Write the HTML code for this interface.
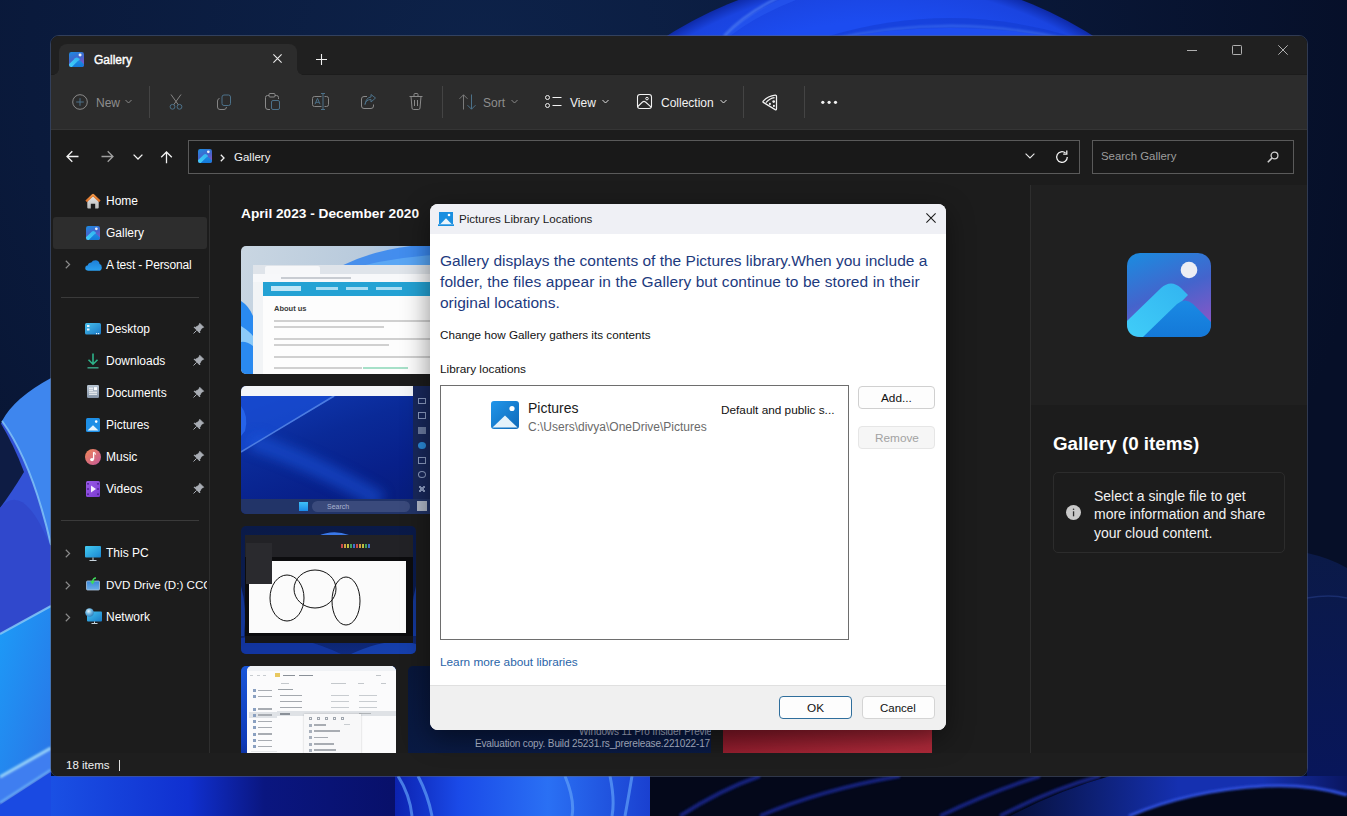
<!DOCTYPE html>
<html><head><meta charset="utf-8">
<style>
*{box-sizing:border-box;margin:0;padding:0}
html,body{width:1347px;height:816px;overflow:hidden;background:#0a1838;font-family:"Liberation Sans",sans-serif}
.a{position:absolute}
#wall{position:absolute;left:0;top:0;width:1347px;height:816px}
#win{position:absolute;left:51px;top:36px;width:1256px;height:740px;border-radius:8px;background:#1c1c1c;overflow:hidden}
#winb{position:absolute;left:50px;top:35px;width:1258px;height:742px;border-radius:9px;border:1px solid rgba(90,100,120,.5)}
.t{position:absolute;white-space:nowrap;color:#fff;line-height:1}
svg.i{position:absolute;overflow:visible}
</style></head><body>
<svg width="0" height="0" style="position:absolute">
  <defs>
    <linearGradient id="galBg" x1="0.2" y1="0" x2="0.6" y2="1">
      <stop offset="0" stop-color="#1f88de"/>
      <stop offset="0.5" stop-color="#4464cc"/>
      <stop offset="1" stop-color="#8a56c6"/>
    </linearGradient>
    <linearGradient id="galM1" x1="0" y1="1" x2="1" y2="0">
      <stop offset="0" stop-color="#40cdf8"/>
      <stop offset="1" stop-color="#32b4f0"/>
    </linearGradient>
    <linearGradient id="galM2" x1="0" y1="0" x2="0" y2="1">
      <stop offset="0" stop-color="#1a8ae4"/>
      <stop offset="1" stop-color="#1478d8"/>
    </linearGradient>
    <symbol id="gal" viewBox="0 0 84 84">
      <rect x="0" y="0" width="84" height="84" rx="13" fill="url(#galBg)"/>
      <circle cx="62" cy="17" r="8.3" fill="#eceef4"/>
      <path d="M0 68 L34 35 Q44 26 54 35 L61 42 L20 84 H14 Q0 84 0 71Z" fill="url(#galM1)"/>
      <path d="M16 84 L50 51 Q58 44 66 51 L84 69 V71 Q84 84 71 84Z" fill="url(#galM2)"/>
    </symbol>
    <linearGradient id="picG" x1="0" y1="0" x2="1" y2="1">
      <stop offset="0" stop-color="#2196ea"/>
      <stop offset="1" stop-color="#0e68b8"/>
    </linearGradient>
    <symbol id="pic" viewBox="0 0 28 28">
      <rect x="0" y="0" width="28" height="28" rx="3" fill="url(#picG)"/>
      <circle cx="21" cy="7.5" r="2.6" fill="#fff"/>
      <path d="M1.5 26.5 L14 14.5 L26.5 26.5Z" fill="#e4f2fb"/>
    </symbol>
  </defs>
</svg>
<svg id="wall" width="1347" height="816" viewBox="0 0 1347 816">
  <defs>
    <radialGradient id="bgG" cx="480" cy="60" r="900" gradientUnits="userSpaceOnUse">
      <stop offset="0" stop-color="#0d2249"/>
      <stop offset="0.5" stop-color="#0a1a3c"/>
      <stop offset="1" stop-color="#060f28"/>
    </radialGradient>
    <radialGradient id="topB" cx="880" cy="372" r="398" gradientUnits="userSpaceOnUse">
      <stop offset="0.88" stop-color="#1c4cf0"/>
      <stop offset="0.97" stop-color="#1a44e0"/>
      <stop offset="1" stop-color="#0e2aa8"/>
    </radialGradient>
    <linearGradient id="leftB" x1="0" y1="0" x2="0" y2="1">
      <stop offset="0" stop-color="#2a70ea"/>
      <stop offset="1" stop-color="#2a62e6"/>
    </linearGradient>
    <linearGradient id="botL" x1="0" y1="0" x2="1" y2="0">
      <stop offset="0" stop-color="#1a50e4"/>
      <stop offset="0.4" stop-color="#1030d0"/>
      <stop offset="0.62" stop-color="#0a1680"/>
      <stop offset="1" stop-color="#08106a"/>
    </linearGradient>
    <linearGradient id="botM" x1="0" y1="0" x2="1" y2="0">
      <stop offset="0" stop-color="#0c22b0"/>
      <stop offset="0.25" stop-color="#1a4ae8"/>
      <stop offset="0.6" stop-color="#2a70f4"/>
      <stop offset="1" stop-color="#1a40d0"/>
    </linearGradient>
    <linearGradient id="cyanG" x1="0" y1="0" x2="1" y2="1">
      <stop offset="0" stop-color="#1c9cf8"/>
      <stop offset="1" stop-color="#2a74e6"/>
    </linearGradient>
    <filter id="bl1" x="-20%" y="-20%" width="140%" height="140%"><feGaussianBlur stdDeviation="1"/></filter>
    <linearGradient id="brG" x1="0" y1="0" x2="1" y2="0">
      <stop offset="0" stop-color="#06103a"/>
      <stop offset="0.5" stop-color="#1530b0"/>
      <stop offset="0.75" stop-color="#1530b0"/>
      <stop offset="1" stop-color="#0a1660"/>
    </linearGradient>
    <linearGradient id="rightB" x1="0" y1="0" x2="0" y2="1">
      <stop offset="0" stop-color="#0b1a48"/>
      <stop offset="1" stop-color="#08165a"/>
    </linearGradient>
  </defs>
  <rect width="1347" height="816" fill="url(#bgG)"/>
  <!-- top bloom -->
  <circle cx="880" cy="372" r="398" fill="url(#topB)"/>
  <path d="M724 36 Q760 0 840 -20 L900 -26 Q790 -10 730 36Z" fill="#2a5cf4" opacity=".5"/>
  <path d="M724 36 Q750 8 800 -12" fill="none" stroke="#6a9af8" stroke-width="2" opacity=".6" filter="url(#bl1)"/>
  <path d="M829 36 Q950 0 1070 36 Z" fill="#1238c8" opacity=".45"/>
  <path d="M829 40 Q950 12 1070 40" fill="none" stroke="#4a7cf4" stroke-width="2.5" opacity=".55" filter="url(#bl1)"/>
  <path d="M829 40 Q950 16 1070 40 Z" fill="#1f4ef0"/>
  <!-- left bloom -->
  <path d="M51 380 Q15 400 0 425 L0 816 L51 816Z" fill="#3352d6"/>
  <path d="M0 422 Q14 445 24 472 Q12 492 0 508Z" fill="#0e1c44"/>
  <path d="M51 378 Q14 398 2 421 Q32 462 51 545Z" fill="#3e86ee"/>
  <path d="M2 421 Q32 462 51 545" fill="none" stroke="#86c8f8" stroke-width="2" opacity=".8"/>
  <path d="M0 508 Q24 480 51 548 L51 606 L0 634Z" fill="#3048cc"/>
  <path d="M0 634 L51 606 L51 748 L0 777Z" fill="url(#cyanG)"/>
  <path d="M0 634 L51 606" stroke="#8acdf8" stroke-width="2" opacity=".8"/>
  <path d="M0 777 L51 748 L51 770 L0 803Z" fill="#3f7ef0"/>
  <path d="M0 777 L51 748" stroke="#9ad6fa" stroke-width="3" filter="url(#bl1)"/>
  <path d="M0 803 L51 770" stroke="#6ab0f6" stroke-width="2.5" filter="url(#bl1)"/>
  <path d="M0 805 L51 772 L51 816 L0 816Z" fill="#1a4ae2"/>
  <!-- bottom strip -->
  <rect x="51" y="776" width="344" height="40" fill="url(#botL)"/>
  <rect x="395" y="776" width="255" height="40" fill="url(#botM)"/>
  <path d="M398 776 Q410 795 412 816 M418 776 Q428 795 432 816 M565 776 Q575 800 572 816 M610 776 Q615 800 612 816 M632 776 Q628 800 625 816" fill="none" stroke="#60a0f8" stroke-width="3" opacity=".7"/>
  <rect x="650" y="776" width="697" height="40" fill="#04081a"/>
  <path d="M1010 816 Q1060 790 1110 776 L1347 776 L1347 795 Q1310 784 1265 786 Q1190 790 1129 816Z" fill="url(#brG)"/>
  <path d="M680 816 Q720 790 760 776 M760 816 Q820 790 900 776 M940 816 Q990 792 1040 776 M1000 816 Q1050 790 1100 776" fill="none" stroke="#1a2a9a" stroke-width="4" opacity=".75" filter="url(#bl1)"/>
  <path d="M1129 816 Q1190 790 1265 786 Q1310 784 1347 795" fill="none" stroke="#2e4ed8" stroke-width="3" filter="url(#bl1)"/>
  <!-- right strip -->
  <path d="M1307 553 Q1330 558 1347 568 L1347 776 L1307 776Z" fill="url(#rightB)"/>
  <path d="M1307 598 Q1330 594 1347 598" fill="none" stroke="#2a4290" stroke-width="1.5" opacity=".5"/>
</svg>
<div id="winb"></div>
<div id="win">
  <!-- title strip -->
  <div class="a" style="left:0;top:0;width:1256px;height:38px;background:#202020"></div>
  <!-- tab -->
  <div class="a" style="left:8px;top:8px;width:238px;height:32px;background:#2c2c2c;border-radius:8px 8px 0 0"></div>
  <div class="a" style="left:246px;top:33px;width:6px;height:6px;background:radial-gradient(circle at 100% 0,transparent 5.5px,#2c2c2c 6px)"></div>
  <div class="a" style="left:2px;top:33px;width:6px;height:6px;background:radial-gradient(circle at 0 0,transparent 5.5px,#2c2c2c 6px)"></div>
  <svg class="i" style="left:18px;top:16px" width="15" height="15"><use href="#gal" width="15" height="15"/></svg>
  <div class="t" style="left:43px;top:18px;font-size:12px;-webkit-text-stroke:.4px #fff">Gallery</div>
  <svg class="i" style="left:222px;top:18px" width="9" height="9" viewBox="0 0 9 9"><path d="M.4 .4L8.6 8.6M8.6 .4L.4 8.6" stroke="#ececec" stroke-width="1.1"/></svg>
  <svg class="i" style="left:265px;top:18px" width="11" height="11" viewBox="0 0 11 11"><path d="M5.5 0V11M0 5.5H11" stroke="#f0f0f0" stroke-width="1.1"/></svg>
  <!-- window controls -->
  <svg class="i" style="left:1136px;top:14px" width="10" height="1" viewBox="0 0 10 1"><path d="M0 .5H10" stroke="#b0b0b0" stroke-width="1"/></svg>
  <svg class="i" style="left:1181px;top:9px" width="10" height="10" viewBox="0 0 10 10"><rect x=".5" y=".5" width="9" height="9" rx=".8" fill="none" stroke="#b0b0b0" stroke-width="1"/></svg>
  <svg class="i" style="left:1227px;top:9px" width="10" height="10" viewBox="0 0 10 10"><path d="M.3 .3L9.7 9.7M9.7 .3L.3 9.7" stroke="#b0b0b0" stroke-width="1"/></svg>

  <!-- toolbar -->
  <div class="a" style="left:0;top:39px;width:1256px;height:55px;background:#2c2c2c;border-bottom:1px solid #353535"></div>
  <div id="tb">
  <!-- New -->
  <svg class="i" style="left:21px;top:58px" width="16" height="16" viewBox="0 0 16 16"><circle cx="8" cy="8" r="7.3" fill="none" stroke="#8a8a8a" stroke-width="1"/><path d="M8 4.2V11.8M4.2 8H11.8" stroke="#4c7189" stroke-width="1"/></svg>
  <div class="t" style="left:45px;top:61px;font-size:12px;color:#8e8e8e">New</div>
  <svg class="i" style="left:74px;top:63px" width="7" height="5" viewBox="0 0 7 5"><path d="M.5 1L3.5 4L6.5 1" fill="none" stroke="#8a8a8a" stroke-width="1"/></svg>
  <div class="a" style="left:98px;top:50px;width:1px;height:32px;background:#444"></div>
  <!-- cut -->
  <svg class="i" style="left:118px;top:58px" width="14" height="16" viewBox="0 0 14 16"><path d="M2 .5L9.5 11M12 .5L4.5 11" stroke="#858585" stroke-width="1"/><circle cx="3.5" cy="12.8" r="2.4" fill="none" stroke="#4c7189" stroke-width="1"/><circle cx="10.5" cy="12.8" r="2.4" fill="none" stroke="#4c7189" stroke-width="1"/></svg>
  <!-- copy -->
  <svg class="i" style="left:166px;top:58px" width="15" height="16" viewBox="0 0 15 16"><rect x="5" y="1" width="8.5" height="10.5" rx="2" fill="none" stroke="#4c7189" stroke-width="1"/><path d="M2.5 4.5Q.5 4.8 .5 7V13Q.5 15.5 3 15.5H7Q9.3 15.5 9.5 13" fill="none" stroke="#858585" stroke-width="1"/></svg>
  <!-- paste -->
  <svg class="i" style="left:214px;top:57px" width="15" height="17" viewBox="0 0 15 17"><path d="M4 2.5H2.5Q.5 2.5 .5 4.5V14Q.5 16.5 3 16.5H5" fill="none" stroke="#8a8a8a" stroke-width="1"/><path d="M10 2.5H11.5Q13.5 2.5 13.5 4.5V6" fill="none" stroke="#8a8a8a" stroke-width="1"/><rect x="4" y=".5" width="6" height="3.5" rx="1" fill="none" stroke="#8a8a8a" stroke-width="1"/><rect x="6.5" y="7.5" width="8" height="9" rx="1.5" fill="none" stroke="#4c7189" stroke-width="1"/></svg>
  <!-- rename -->
  <svg class="i" style="left:261px;top:57px" width="17" height="17" viewBox="0 0 17 17"><path d="M9.5 3.5H2.5Q.5 3.5 .5 5.5V11.5Q.5 13.5 2.5 13.5H9.5M12.5 3.5H14.5Q16.5 3.5 16.5 5.5V11.5Q16.5 13.5 14.5 13.5H12.5" fill="none" stroke="#858585" stroke-width="1"/><path d="M11 1V16M9 .5H13M9 16.5H13" stroke="#4c7189" stroke-width="1"/><path d="M3 11.2L5.5 5.3L8 11.2M3.9 9.3H7.1" fill="none" stroke="#4c7189" stroke-width="1"/></svg>
  <!-- share -->
  <svg class="i" style="left:310px;top:58px" width="15" height="15" viewBox="0 0 15 15"><path d="M6 2.5H3Q.5 2.5 .5 5V12Q.5 14.5 3 14.5H10Q12.5 14.5 12.5 12V10.5" fill="none" stroke="#8a8a8a" stroke-width="1"/><path d="M4 10.5Q5 5.5 10 5.5V8L14.5 4L10 .5V3Q5 3.5 4 10.5Z" fill="none" stroke="#4c7189" stroke-width="1"/></svg>
  <!-- delete -->
  <svg class="i" style="left:358px;top:57px" width="14" height="17" viewBox="0 0 14 17"><path d="M.5 3.5H13.5M5 3.5V1.5Q5 .5 6 .5H8Q9 .5 9 1.5V3.5M2 3.5L3 15Q3.1 16.5 4.5 16.5H9.5Q10.9 16.5 11 15L12 3.5M5.5 7V13M8.5 7V13" fill="none" stroke="#8a8a8a" stroke-width="1"/></svg>
  <div class="a" style="left:391px;top:50px;width:1px;height:32px;background:#444"></div>
  <!-- sort -->
  <svg class="i" style="left:408px;top:58px" width="17" height="16" viewBox="0 0 17 16"><path d="M4.5 15.5V.8M.5 4.8L4.5 .8L8.5 4.8" fill="none" stroke="#7a7a7a" stroke-width="1"/><path d="M12.5 .5V15.2M8.5 11.2L12.5 15.2L16.5 11.2" fill="none" stroke="#4c7189" stroke-width="1"/></svg>
  <div class="t" style="left:432px;top:61px;font-size:12px;color:#8e8e8e">Sort</div>
  <svg class="i" style="left:460px;top:63px" width="7" height="5" viewBox="0 0 7 5"><path d="M.5 1L3.5 4L6.5 1" fill="none" stroke="#8a8a8a" stroke-width="1"/></svg>
  <!-- view -->
  <svg class="i" style="left:494px;top:59px" width="17" height="14" viewBox="0 0 17 14"><rect x=".5" y=".5" width="4" height="4" rx="2" fill="none" stroke="#f2f2f2" stroke-width="1"/><rect x=".5" y="8.5" width="4" height="4" rx="2" fill="none" stroke="#f2f2f2" stroke-width="1"/><path d="M7.5 2.5H16.5M7.5 10.5H16.5" stroke="#f2f2f2" stroke-width="1"/></svg>
  <div class="t" style="left:519px;top:61px;font-size:12px;color:#f2f2f2">View</div>
  <svg class="i" style="left:551px;top:63px" width="7" height="5" viewBox="0 0 7 5"><path d="M.5 1L3.5 4L6.5 1" fill="none" stroke="#e0e0e0" stroke-width="1"/></svg>
  <!-- collection -->
  <svg class="i" style="left:586px;top:58px" width="15" height="15" viewBox="0 0 15 15"><rect x=".5" y=".5" width="14" height="14" rx="2.5" fill="none" stroke="#f2f2f2" stroke-width="1.1"/><circle cx="10" cy="4.6" r="1.3" fill="none" stroke="#f2f2f2" stroke-width="1"/><path d="M.8 12.5L5.5 8Q7 6.8 8.5 8L14.2 13.2" fill="none" stroke="#f2f2f2" stroke-width="1.1"/></svg>
  <div class="t" style="left:610px;top:61px;font-size:12px;color:#f2f2f2">Collection</div>
  <svg class="i" style="left:669px;top:63px" width="7" height="5" viewBox="0 0 7 5"><path d="M.5 1L3.5 4L6.5 1" fill="none" stroke="#e0e0e0" stroke-width="1"/></svg>
  <div class="a" style="left:692px;top:50px;width:1px;height:32px;background:#444"></div>
  <!-- slice icon -->
  <svg class="i" style="left:711px;top:58px" width="16" height="17" viewBox="0 0 16 17"><path d="M13.2 1.2Q6 2 1.2 7.2Q.6 7.9 1.3 8.4L13.2 15.6Q14.5 16.3 14.5 14.8V2.4Q14.5 1.1 13.2 1.2Z" fill="none" stroke="#f2f2f2" stroke-width="1.25" stroke-linejoin="round"/><path d="M12.6 3.6Q7.5 4.3 3.9 8.6" fill="none" stroke="#f2f2f2" stroke-width="1.2"/><circle cx="11.7" cy="7.6" r="1.35" fill="#f2f2f2"/><circle cx="7.9" cy="9.9" r="1.05" fill="#f2f2f2"/><circle cx="11.9" cy="11.9" r="1.05" fill="#f2f2f2"/></svg>
  <div class="a" style="left:753px;top:50px;width:1px;height:32px;background:#444"></div>
  <!-- more -->
  <svg class="i" style="left:770px;top:64px" width="17" height="4" viewBox="0 0 17 4"><circle cx="1.8" cy="2.3" r="1.6" fill="#f2f2f2"/><circle cx="8.1" cy="2.3" r="1.6" fill="#f2f2f2"/><circle cx="14.5" cy="2.3" r="1.6" fill="#f2f2f2"/></svg>
  </div>

  <!-- nav row -->
  <div id="nav">
  <svg class="i" style="left:15px;top:114px" width="13" height="13" viewBox="0 0 13 13"><path d="M12.5 6.5H1.2M6.3 1.2L1 6.5L6.3 11.8" fill="none" stroke="#f2f2f2" stroke-width="1.3"/></svg>
  <svg class="i" style="left:50px;top:114px" width="13" height="13" viewBox="0 0 13 13"><path d="M.5 6.5H11.8M6.7 1.2L12 6.5L6.7 11.8" fill="none" stroke="#a0a0a0" stroke-width="1.3"/></svg>
  <svg class="i" style="left:82px;top:118px" width="10" height="6" viewBox="0 0 10 6"><path d="M.6 .6L5 5L9.4 .6" fill="none" stroke="#f2f2f2" stroke-width="1.3"/></svg>
  <svg class="i" style="left:109px;top:115px" width="13" height="13" viewBox="0 0 13 13"><path d="M6.5 12.3V1.2M1.2 6.3L6.5 1L11.8 6.3" fill="none" stroke="#f2f2f2" stroke-width="1.3"/></svg>
  <div class="a" style="left:137px;top:104px;width:892px;height:34px;border:1px solid #5a5a5a;background:#191919"></div>
  <svg class="i" style="left:147px;top:113px" width="14" height="14"><use href="#gal" width="14" height="14"/></svg>
  <svg class="i" style="left:169px;top:118px" width="5" height="8" viewBox="0 0 5 8"><path d="M.8 .8L4 4L.8 7.2" fill="none" stroke="#f2f2f2" stroke-width="1.3"/></svg>
  <div class="t" style="left:183px;top:116px;font-size:11.5px;color:#f2f2f2">Gallery</div>
  <svg class="i" style="left:974px;top:117px" width="10" height="6" viewBox="0 0 10 6"><path d="M.6 .6L5 5L9.4 .6" fill="none" stroke="#e8e8e8" stroke-width="1.1"/></svg>
  <svg class="i" style="left:1004px;top:114px" width="14" height="14" viewBox="0 0 14 14"><path d="M12.3 7A5.3 5.3 0 1 1 10.5 3" fill="none" stroke="#f2f2f2" stroke-width="1.3"/><path d="M11.8 .6V4.2H8.2" fill="none" stroke="#f2f2f2" stroke-width="1.3"/></svg>
  <div class="a" style="left:1041px;top:104px;width:202px;height:34px;border:1px solid #5a5a5a;background:#191919"></div>
  <div class="t" style="left:1050px;top:115px;font-size:11.4px;color:#9d9d9d">Search Gallery</div>
  <svg class="i" style="left:1216px;top:115px" width="12" height="12" viewBox="0 0 12 12"><circle cx="7.5" cy="4.5" r="3.4" fill="none" stroke="#d0d0d0" stroke-width="1.3"/><path d="M5 7L.8 11.2" stroke="#d0d0d0" stroke-width="1.6"/></svg>
  </div>

  <!-- sidebar -->
  <div id="side">
  <div class="a" style="left:2px;top:181px;width:154px;height:32px;background:#2d2d2d;border-radius:3px"></div>
  <div class="a" style="left:158px;top:149px;width:1px;height:568px;background:#2e2e2e"></div>
  <div class="a" style="left:10px;top:261px;width:138px;height:1px;background:#3a3a3a"></div>
  <div class="a" style="left:10px;top:484px;width:138px;height:1px;background:#3a3a3a"></div>
  <!-- home -->
  <svg class="i" style="left:34px;top:157px" width="16" height="16" viewBox="0 0 16 16"><defs><linearGradient id="hb" x1="0" y1="0" x2="0" y2="1"><stop offset="0" stop-color="#e6e6e6"/><stop offset="1" stop-color="#b9b9b9"/></linearGradient><linearGradient id="hr" x1="0" y1="0" x2="0" y2="1"><stop offset="0" stop-color="#f39a4a"/><stop offset="1" stop-color="#d86a24"/></linearGradient></defs><path d="M2.3 7.8L8 3.2L13.7 7.8V14.6Q13.7 15.6 12.7 15.6H10.2V10.8H5.8V15.6H3.3Q2.3 15.6 2.3 14.6Z" fill="url(#hb)"/><path d="M.4 7.4L7 1.2Q8 .3 9 1.2L15.6 7.4L14 9.2L8 3.6L2 9.2Z" fill="url(#hr)"/></svg>
  <div class="t" style="left:55px;top:159px;font-size:12px">Home</div>
  <!-- gallery -->
  <svg class="i" style="left:35px;top:190px" width="14" height="14"><use href="#gal" width="14" height="14"/></svg>
  <div class="t" style="left:55px;top:191px;font-size:12px">Gallery</div>
  <!-- onedrive -->
  <svg class="i" style="left:14px;top:224px" width="6" height="9" viewBox="0 0 6 9"><path d="M.8 .8L4.6 4.5L.8 8.2" fill="none" stroke="#8a8a8a" stroke-width="1.2"/></svg>
  <svg class="i" style="left:34px;top:224px" width="17" height="11" viewBox="0 0 17 11"><defs><linearGradient id="od" x1="0" y1="0" x2="0" y2="1"><stop offset="0" stop-color="#1e7fd8"/><stop offset="1" stop-color="#2aa0f0"/></linearGradient></defs><path d="M3.5 10.8Q.2 10.8 .2 8Q.2 5.6 2.8 5.3Q3.5 2.6 6.3 2.6Q7.5 .3 10.5 .3Q14 .3 14.6 4Q16.8 4.4 16.8 7.4Q16.8 10.8 13.5 10.8Z" fill="url(#od)"/></svg>
  <div class="t" style="left:55px;top:223px;font-size:12px;letter-spacing:-.15px">A test - Personal</div>
  <!-- desktop -->
  <svg class="i" style="left:34px;top:287px" width="16" height="12" viewBox="0 0 16 12"><defs><linearGradient id="dk" x1="0" y1="0" x2="1" y2="1"><stop offset="0" stop-color="#48c0ec"/><stop offset="1" stop-color="#1a78c6"/></linearGradient></defs><rect x="0" y="0" width="16" height="11.5" rx="1.5" fill="url(#dk)"/><rect x="2" y="2" width="2.5" height="2" fill="#e8f6ff"/><rect x="2" y="5.5" width="2.5" height="2" fill="#e8f6ff"/><rect x="11" y="10" width="1.2" height="1.2" fill="#e8f6ff"/><rect x="13" y="10" width="1.2" height="1.2" fill="#e8f6ff"/></svg>
  <div class="t" style="left:55px;top:287px;font-size:12px">Desktop</div>
  <!-- downloads -->
  <svg class="i" style="left:36px;top:317px" width="12" height="16" viewBox="0 0 12 16"><path d="M6 .5V11M1.5 6.8L6 11.2L10.5 6.8" fill="none" stroke="#2db38a" stroke-width="1.6"/><path d="M.5 14.8H11.5" stroke="#3aa88a" stroke-width="1.4"/></svg>
  <div class="t" style="left:55px;top:319px;font-size:12px">Downloads</div>
  <!-- documents -->
  <svg class="i" style="left:36px;top:349px" width="12" height="13" viewBox="0 0 12 13"><defs><linearGradient id="dc" x1="0" y1="0" x2="0" y2="1"><stop offset="0" stop-color="#b9c6d4"/><stop offset="1" stop-color="#8493a6"/></linearGradient></defs><rect x="0" y="0" width="12" height="13" rx="1.2" fill="url(#dc)"/><path d="M2 3.2H6M2 5.2H6M2 7.2H10M2 9.2H10" stroke="#fff" stroke-width="1"/><rect x="7" y="2.2" width="3" height="3" fill="#fff"/></svg>
  <div class="t" style="left:55px;top:351px;font-size:12px">Documents</div>
  <!-- pictures -->
  <svg class="i" style="left:35px;top:382px" width="14" height="14" viewBox="0 0 14 14"><rect width="14" height="14" rx="1.5" fill="#1e8fe6"/><circle cx="10.2" cy="3.6" r="1.3" fill="#fff"/><path d="M1.5 12.5L7 7.2L12.5 12.5Z" fill="#e6f4fc"/></svg>
  <div class="t" style="left:55px;top:383px;font-size:12px">Pictures</div>
  <!-- music -->
  <svg class="i" style="left:34px;top:413px" width="16" height="16" viewBox="0 0 16 16"><defs><linearGradient id="mu" x1="0" y1="0" x2="1" y2="1"><stop offset="0" stop-color="#f08656"/><stop offset="1" stop-color="#c4589a"/></linearGradient></defs><circle cx="8" cy="8" r="8" fill="url(#mu)"/><path d="M8.6 3.2V10.3" stroke="#fff" stroke-width="1.3"/><path d="M8.6 3.2Q10.3 3.6 10.5 5.6" fill="none" stroke="#fff" stroke-width="1.1"/><ellipse cx="7" cy="10.6" rx="1.9" ry="1.6" fill="#fff"/></svg>
  <div class="t" style="left:55px;top:415px;font-size:12px">Music</div>
  <!-- videos -->
  <svg class="i" style="left:35px;top:445px" width="14" height="16" viewBox="0 0 14 16"><defs><linearGradient id="vi" x1="0" y1="0" x2="1" y2="1"><stop offset="0" stop-color="#9a5ae8"/><stop offset="1" stop-color="#7a3ad0"/></linearGradient></defs><rect width="14" height="16" rx="1.5" fill="url(#vi)"/><g fill="#4a1e8e"><rect x="1.2" y="2" width="1.6" height="1.6"/><rect x="1.2" y="7.2" width="1.6" height="1.6"/><rect x="1.2" y="12.4" width="1.6" height="1.6"/><rect x="11.2" y="2" width="1.6" height="1.6"/><rect x="11.2" y="7.2" width="1.6" height="1.6"/><rect x="11.2" y="12.4" width="1.6" height="1.6"/></g><path d="M5 4.5L10 8L5 11.5Z" fill="#f4eefe"/></svg>
  <div class="t" style="left:55px;top:447px;font-size:12px">Videos</div>
  <!-- pins -->
  <svg class="i" style="left:142px;top:287px" width="11" height="11" viewBox="0 0 11 11"><path d="M6.8 .4L10.6 4.2L8.5 5.2L6.6 8.5L6.8 10L1 4.2L2.5 4.4L5.8 2.5Z M3.6 7.4L.5 10.5" fill="#a9adb4" stroke="#a9adb4" stroke-width="1" stroke-linejoin="round"/></svg>
  <svg class="i" style="left:142px;top:319px" width="11" height="11" viewBox="0 0 11 11"><path d="M6.8 .4L10.6 4.2L8.5 5.2L6.6 8.5L6.8 10L1 4.2L2.5 4.4L5.8 2.5Z M3.6 7.4L.5 10.5" fill="#a9adb4" stroke="#a9adb4" stroke-width="1" stroke-linejoin="round"/></svg>
  <svg class="i" style="left:142px;top:351px" width="11" height="11" viewBox="0 0 11 11"><path d="M6.8 .4L10.6 4.2L8.5 5.2L6.6 8.5L6.8 10L1 4.2L2.5 4.4L5.8 2.5Z M3.6 7.4L.5 10.5" fill="#a9adb4" stroke="#a9adb4" stroke-width="1" stroke-linejoin="round"/></svg>
  <svg class="i" style="left:142px;top:383px" width="11" height="11" viewBox="0 0 11 11"><path d="M6.8 .4L10.6 4.2L8.5 5.2L6.6 8.5L6.8 10L1 4.2L2.5 4.4L5.8 2.5Z M3.6 7.4L.5 10.5" fill="#a9adb4" stroke="#a9adb4" stroke-width="1" stroke-linejoin="round"/></svg>
  <svg class="i" style="left:142px;top:415px" width="11" height="11" viewBox="0 0 11 11"><path d="M6.8 .4L10.6 4.2L8.5 5.2L6.6 8.5L6.8 10L1 4.2L2.5 4.4L5.8 2.5Z M3.6 7.4L.5 10.5" fill="#a9adb4" stroke="#a9adb4" stroke-width="1" stroke-linejoin="round"/></svg>
  <svg class="i" style="left:142px;top:447px" width="11" height="11" viewBox="0 0 11 11"><path d="M6.8 .4L10.6 4.2L8.5 5.2L6.6 8.5L6.8 10L1 4.2L2.5 4.4L5.8 2.5Z M3.6 7.4L.5 10.5" fill="#a9adb4" stroke="#a9adb4" stroke-width="1" stroke-linejoin="round"/></svg>
  <!-- this pc -->
  <svg class="i" style="left:14px;top:513px" width="6" height="9" viewBox="0 0 6 9"><path d="M.8 .8L4.6 4.5L.8 8.2" fill="none" stroke="#8a8a8a" stroke-width="1.2"/></svg>
  <svg class="i" style="left:34px;top:510px" width="16" height="15" viewBox="0 0 16 15"><defs><linearGradient id="pc" x1="0" y1="0" x2="1" y2="1"><stop offset="0" stop-color="#44ccf2"/><stop offset="1" stop-color="#1a86d0"/></linearGradient></defs><rect width="16" height="11.5" rx="1" fill="url(#pc)"/><path d="M8 11.5V14M4.5 14.5H11.5" stroke="#c8d4dc" stroke-width="1"/></svg>
  <div class="t" style="left:55px;top:511px;font-size:12px">This PC</div>
  <!-- dvd -->
  <svg class="i" style="left:14px;top:545px" width="6" height="9" viewBox="0 0 6 9"><path d="M.8 .8L4.6 4.5L.8 8.2" fill="none" stroke="#8a8a8a" stroke-width="1.2"/></svg>
  <svg class="i" style="left:35px;top:541px" width="14" height="13" viewBox="0 0 14 13"><defs><linearGradient id="dv" x1="0" y1="0" x2="0" y2="1"><stop offset="0" stop-color="#3a86d8"/><stop offset="1" stop-color="#6aaee8"/></linearGradient></defs><rect x=".5" y="4" width="13" height="9" rx="1" fill="url(#dv)" stroke="#a9c4e0" stroke-width=".8"/><path d="M10 1Q7 1 6.5 5" fill="none" stroke="#3fdc5a" stroke-width="1.6"/><path d="M4 4L6.5 7.5L9 4Z" fill="#3fdc5a"/></svg>
  <div class="t" style="left:55px;top:541px;font-size:11.6px;width:101px;overflow:hidden;line-height:15px;height:16px">DVD Drive (D:) CCC</div>
  <!-- network -->
  <svg class="i" style="left:14px;top:577px" width="6" height="9" viewBox="0 0 6 9"><path d="M.8 .8L4.6 4.5L.8 8.2" fill="none" stroke="#8a8a8a" stroke-width="1.2"/></svg>
  <svg class="i" style="left:34px;top:572px" width="17" height="16" viewBox="0 0 17 16"><defs><linearGradient id="nw" x1="0" y1="0" x2="1" y2="1"><stop offset="0" stop-color="#44c4f0"/><stop offset="1" stop-color="#1a7cc8"/></linearGradient><radialGradient id="gl" cx=".4" cy=".35" r=".7"><stop offset="0" stop-color="#e8f4fc"/><stop offset=".5" stop-color="#6ab4e0"/><stop offset="1" stop-color="#2a78b8"/></radialGradient></defs><rect x="2" y="3.5" width="15" height="10" rx="1" fill="url(#nw)"/><path d="M9.5 13.5V15M6.5 15.5H12.5" stroke="#c8d4dc" stroke-width="1"/><circle cx="4.5" cy="4.5" r="4.3" fill="url(#gl)"/></svg>
  <div class="t" style="left:55px;top:575px;font-size:12px">Network</div>
  </div>

  <!-- main -->
  <div id="main">
  <div class="t" style="left:190px;top:171px;font-size:13.7px;font-weight:bold;color:#fff">April 2023 - December 2020</div>
  <!-- clip container for thumbs -->
  <div class="a" style="left:159px;top:149px;width:820px;height:568px;overflow:hidden">
    <!-- thumb1 -->
    <div class="a" style="left:31px;top:61px;width:260px;height:128px;border-radius:5px;overflow:hidden;background:linear-gradient(100deg,#c9d6e2 0%,#b8cadc 45%,#9cc0e8 60%,#3d8ef0 75%,#4aa0f4 100%)">
      <svg class="a" style="left:0;top:0" width="260" height="128" viewBox="0 0 260 128">
        <path d="M100 20 Q160 -10 260 0 L260 20Z" fill="#2a7ff0" opacity=".8"/>
        <path d="M120 20 Q180 5 260 8 L260 20Z" fill="#6ab8f8" opacity=".6"/>
        <path d="M0 55 Q8 60 12 70 L12 128 L0 128Z" fill="#2a8af0"/>
        <path d="M0 80 Q8 85 12 90 L12 100 Q5 95 0 96Z" fill="#8ccaf8"/>
      </svg>
      <div class="a" style="left:12px;top:19px;width:260px;height:9px;background:#dfe4ea"></div>
      <div class="a" style="left:24px;top:20px;width:55px;height:8px;background:#f6f7f9;border-radius:2px 2px 0 0"></div>
      <div class="a" style="left:12px;top:28px;width:260px;height:8px;background:#f7f8fa"></div>
      <div class="a" style="left:40px;top:31px;width:70px;height:2px;background:#c8ccd2"></div>
      <div class="a" style="left:12px;top:36px;width:260px;height:92px;background:#f2f4f6"></div>
      <div class="a" style="left:22px;top:36px;width:240px;height:14px;background:#24a2d4"></div>
      <div class="a" style="left:30px;top:40px;width:30px;height:5px;background:#bfe6f6"></div>
      <div class="a" style="left:75px;top:41px;width:22px;height:3px;background:#a9dcf2"></div>
      <div class="a" style="left:105px;top:41px;width:22px;height:3px;background:#a9dcf2"></div>
      <div class="a" style="left:135px;top:41px;width:26px;height:3px;background:#a9dcf2"></div>
      <div class="a" style="left:22px;top:50px;width:240px;height:78px;background:#fdfdfd"></div>
      <div class="t" style="left:33px;top:59px;font-size:7.5px;color:#3a3a3a;font-weight:bold">About us</div>
      <div class="a" style="left:33px;top:74px;width:230px;height:1.5px;background:#d0d0d0"></div>
      <div class="a" style="left:33px;top:80px;width:110px;height:1.5px;background:#d0d0d0"></div>
      <div class="a" style="left:33px;top:92px;width:230px;height:1.5px;background:#d0d0d0"></div>
      <div class="a" style="left:33px;top:98px;width:115px;height:1.5px;background:#d0d0d0"></div>
      <div class="a" style="left:33px;top:110px;width:230px;height:1.5px;background:#d0d0d0"></div>
      <div class="a" style="left:33px;top:121px;width:88px;height:1.5px;background:#d0d0d0"></div>
      <div class="a" style="left:122px;top:121px;width:45px;height:1.5px;background:#a6e0c8"></div>
    </div>
    <!-- thumb2 -->
    <div class="a" style="left:31px;top:201px;width:260px;height:128px;border-radius:5px;overflow:hidden;background:linear-gradient(160deg,#123cb8 0%,#0a2a98 35%,#08208a 60%,#061a70 100%)">
      <svg class="a" style="left:0;top:0" width="260" height="128" viewBox="0 0 260 128">
        <defs><filter id="t2b" x="-50%" y="-50%" width="200%" height="200%"><feGaussianBlur stdDeviation="6"/></filter></defs>
        <path d="M0 10 L95 10 L0 66Z" fill="#1a50d8" opacity=".7"/>
        <path d="M10 55 Q70 75 140 115" fill="none" stroke="#1e58e0" stroke-width="18" opacity=".55" filter="url(#t2b)"/>
        <path d="M0 66 L93 10" stroke="#5a8ae8" stroke-width="1.5" opacity=".8"/>
        <path d="M0 20 Q8 30 4 45 L0 50Z" fill="#2a6af0" opacity=".8"/>
      </svg>
      <div class="a" style="left:0;top:0;width:190px;height:10px;background:#f4f6f9"></div>
      <div class="a" style="left:172px;top:0;width:18px;height:128px;background:#18285c"></div>
      <div class="a" style="left:177px;top:12px;width:8px;height:6px;border:1px solid #8a9ac0"></div>
      <div class="a" style="left:177px;top:26px;width:8px;height:7px;border:1px solid #8a9ac0"></div>
      <div class="a" style="left:177px;top:41px;width:8px;height:7px;background:#6a7aa0"></div>
      <div class="a" style="left:177px;top:56px;width:8px;height:7px;border-radius:50%;background:#2a8ad8"></div>
      <div class="a" style="left:177px;top:71px;width:8px;height:7px;border:1px solid #8a9ac0"></div>
      <div class="a" style="left:177px;top:85px;width:8px;height:7px;border:1px solid #8a9ac0;border-radius:50%"></div>
      <div class="a" style="left:178px;top:100px;width:6px;height:6px;background:linear-gradient(45deg,transparent 40%,#8a9ac0 40%,#8a9ac0 60%,transparent 60%),linear-gradient(-45deg,transparent 40%,#8a9ac0 40%,#8a9ac0 60%,transparent 60%)"></div>
      <div class="a" style="left:0;top:113px;width:260px;height:15px;background:#223468"></div>
      <div class="a" style="left:58px;top:116px;width:9px;height:9px;background:linear-gradient(#3fc0f8,#1a8ae8)"></div>
      <div class="a" style="left:71px;top:115px;width:98px;height:11px;border-radius:6px;background:#3a4a7c"></div>
      <div class="t" style="left:86px;top:117px;font-size:7px;color:#aab4d0">Search</div>
      <div class="a" style="left:176px;top:115px;width:10px;height:10px;background:#b0b8c8"></div>
    </div>
    <!-- thumb3 -->
    <div class="a" style="left:31px;top:341px;width:175px;height:128px;border-radius:5px;overflow:hidden;background:linear-gradient(180deg,#0a1a48 0%,#0a1c50 70%,#0e2a80 100%)">
      <svg class="a" style="left:0;top:0" width="175" height="128" viewBox="0 0 175 128">
        <path d="M77 10 Q92 3 108 9 Z" fill="#3a78e8"/>
        <path d="M0 112 Q50 104 100 128 L0 128Z" fill="#1438a8" opacity=".8"/>
        <path d="M110 128 Q150 110 175 118 L175 128Z" fill="#1a48c0" opacity=".7"/>
        <path d="M0 60 Q6 80 3 110 L0 110Z" fill="#1a48c0" opacity=".6"/>
        <path d="M175 60 Q169 80 172 110 L175 110Z" fill="#1a48c0" opacity=".6"/>
      </svg>
      <div class="a" style="left:4px;top:9px;width:168px;height:108px;background:#0c0c0e"></div>
      <div class="a" style="left:4px;top:9px;width:168px;height:22px;background:#222226"></div>
      <div class="a" style="left:100px;top:18px;width:30px;height:4px;background:repeating-linear-gradient(90deg,#c84a4a 0 2px,transparent 2px 3px,#d0a040 3px 5px,transparent 5px 6px,#c0c040 6px 8px,transparent 8px 9px,#40a060 9px 11px,transparent 11px 12px,#4070d0 12px 14px,transparent 14px 15px)"></div>
      <div class="a" style="left:8px;top:35px;width:157px;height:72px;background:#fbfbfb"></div>
      <div class="a" style="left:5px;top:17px;width:26px;height:41px;background:#2a2a2e"></div>
      <div class="a" style="left:4px;top:110px;width:168px;height:7px;background:#161618"></div>
      <svg class="a" style="left:0;top:0" width="175" height="128" viewBox="0 0 175 128">
        <ellipse cx="46" cy="72" rx="17" ry="23" fill="none" stroke="#111" stroke-width="1"/>
        <ellipse cx="74" cy="63" rx="21" ry="19" fill="none" stroke="#111" stroke-width="1"/>
        <ellipse cx="105" cy="75" rx="14" ry="24" fill="none" stroke="#111" stroke-width="1"/>
      </svg>
    </div>
    <!-- thumb4 -->
    <div class="a" style="left:31px;top:481px;width:155px;height:128px;border-radius:5px;overflow:hidden;background:linear-gradient(180deg,#1a56d8 0%,#0e3ab8 60%,#0a1a50 100%)">
      <div class="a" style="left:6px;top:0;width:149px;height:128px;background:#fbfbfc;border-radius:5px 5px 0 0"></div>
      <div class="a" style="left:6px;top:0;width:149px;height:5px;background:#f0f2f5;border-radius:5px 5px 0 0"></div>
      <div class="a" style="left:9px;top:9px;width:3px;height:1.2px;background:#c8ccd0"></div>
      <div class="a" style="left:16px;top:9px;width:3px;height:1.2px;background:#c8ccd0"></div>
      <div class="a" style="left:22px;top:9px;width:3px;height:1.2px;background:#c8ccd0"></div>
      <div class="a" style="left:34px;top:7px;width:5px;height:4px;background:#e8c860"></div>
      <div class="a" style="left:42px;top:8.5px;width:12px;height:1.5px;background:#8a9098"></div>
      <div class="a" style="left:58px;top:8.5px;width:14px;height:1.5px;background:#8a9098"></div>
      <div class="a" style="left:135px;top:8.5px;width:5px;height:1.2px;background:#c0c4c8"></div>
      <div class="a" style="left:40px;top:17px;width:8px;height:1.2px;background:#c4c8cc"></div>
      <div class="a" style="left:90px;top:17px;width:15px;height:1.2px;background:#c4c8cc"></div>
      <div class="a" style="left:117px;top:17px;width:6px;height:1.2px;background:#c4c8cc"></div>
      <div class="a" style="left:140px;top:17px;width:5px;height:1.2px;background:#c4c8cc"></div>
      <div class="a" style="left:37px;top:22.5px;width:15px;height:1.5px;background:#9aa0a6"></div>
      <div class="a" style="left:39px;top:28.5px;width:22px;height:1.5px;background:#a4a8ae"></div>
      <div class="a" style="left:90px;top:28.5px;width:18px;height:1.2px;background:#c8ccd0"></div>
      <div class="a" style="left:118px;top:28.5px;width:18px;height:1.2px;background:#c8ccd0"></div>
      <div class="a" style="left:39px;top:34.5px;width:22px;height:1.5px;background:#a4a8ae"></div>
      <div class="a" style="left:90px;top:34.5px;width:18px;height:1.2px;background:#c8ccd0"></div>
      <div class="a" style="left:118px;top:34.5px;width:18px;height:1.2px;background:#c8ccd0"></div>
      <div class="a" style="left:39px;top:40.5px;width:22px;height:1.5px;background:#a4a8ae"></div>
      <div class="a" style="left:90px;top:40.5px;width:18px;height:1.2px;background:#c8ccd0"></div>
      <div class="a" style="left:118px;top:40.5px;width:18px;height:1.2px;background:#c8ccd0"></div>
      <div class="a" style="left:36px;top:45px;width:119px;height:5px;background:#dfe2e6"></div>
      <div class="a" style="left:39px;top:47px;width:10px;height:1.5px;background:#8a9098"></div>
      <div class="a" style="left:118px;top:47px;width:12px;height:1.2px;background:#b0b4b8"></div>
      <div class="a" style="left:8px;top:45.5px;width:28px;height:6.5px;background:#e0e3e7"></div>
      <div class="a" style="left:12px;top:23.0px;width:3px;height:3px;background:#8aa0c0"></div>
      <div class="a" style="left:17px;top:23.5px;width:14px;height:1.5px;background:#a8acb2"></div>
      <div class="a" style="left:12px;top:29.0px;width:3px;height:3px;background:#8aa0c0"></div>
      <div class="a" style="left:17px;top:29.5px;width:14px;height:1.5px;background:#a8acb2"></div>
      <div class="a" style="left:12px;top:41.5px;width:3px;height:3px;background:#8aa0c0"></div>
      <div class="a" style="left:17px;top:42px;width:14px;height:1.5px;background:#a8acb2"></div>
      <div class="a" style="left:12px;top:47.5px;width:3px;height:3px;background:#8aa0c0"></div>
      <div class="a" style="left:17px;top:48px;width:14px;height:1.5px;background:#a8acb2"></div>
      <div class="a" style="left:12px;top:54.0px;width:3px;height:3px;background:#8aa0c0"></div>
      <div class="a" style="left:17px;top:54.5px;width:14px;height:1.5px;background:#a8acb2"></div>
      <div class="a" style="left:12px;top:60.0px;width:3px;height:3px;background:#8aa0c0"></div>
      <div class="a" style="left:17px;top:60.5px;width:14px;height:1.5px;background:#a8acb2"></div>
      <div class="a" style="left:12px;top:66.5px;width:3px;height:3px;background:#8aa0c0"></div>
      <div class="a" style="left:17px;top:67px;width:14px;height:1.5px;background:#a8acb2"></div>
      <div class="a" style="left:12px;top:73.0px;width:3px;height:3px;background:#8aa0c0"></div>
      <div class="a" style="left:17px;top:73.5px;width:14px;height:1.5px;background:#a8acb2"></div>
      <div class="a" style="left:12px;top:79.0px;width:3px;height:3px;background:#8aa0c0"></div>
      <div class="a" style="left:17px;top:79.5px;width:14px;height:1.5px;background:#a8acb2"></div>
      <div class="a" style="left:10px;top:85px;width:26px;height:1px;background:#e6e8ea"></div>
      <div class="a" style="left:63px;top:48px;width:57px;height:80px;background:#f8f8f9;box-shadow:0 0 2px rgba(0,0,0,.2)"></div>
      <div class="a" style="left:68px;top:51px;width:3px;height:3px;border:1px solid #a0a6ae"></div>
      <div class="a" style="left:76px;top:51px;width:3px;height:3px;border:1px solid #a0a6ae"></div>
      <div class="a" style="left:84px;top:51px;width:3px;height:3px;border:1px solid #a0a6ae"></div>
      <div class="a" style="left:92px;top:51px;width:3px;height:3px;border:1px solid #a0a6ae"></div>
      <div class="a" style="left:100px;top:51px;width:3px;height:3px;border:1px solid #a0a6ae"></div>
      <div class="a" style="left:68px;top:57.5px;width:3px;height:3px;background:#a8b0bc"></div>
      <div class="a" style="left:73px;top:58px;width:12px;height:1.5px;background:#a8acb2"></div>
      <div class="a" style="left:68px;top:63.5px;width:3px;height:3px;background:#a8b0bc"></div>
      <div class="a" style="left:73px;top:64px;width:26px;height:1.5px;background:#a8acb2"></div>
      <div class="a" style="left:68px;top:70.0px;width:3px;height:3px;background:#a8b0bc"></div>
      <div class="a" style="left:73px;top:70.5px;width:14px;height:1.5px;background:#a8acb2"></div>
      <div class="a" style="left:68px;top:76.5px;width:3px;height:3px;background:#a8b0bc"></div>
      <div class="a" style="left:73px;top:77px;width:20px;height:1.5px;background:#a8acb2"></div>
      <div class="a" style="left:68px;top:82.5px;width:3px;height:3px;background:#a8b0bc"></div>
      <div class="a" style="left:73px;top:83px;width:22px;height:1.5px;background:#a8acb2"></div>
      <div class="a" style="left:103px;top:58px;width:6px;height:1.2px;background:#c8ccd0"></div>
      <div class="a" style="left:0;top:92px;width:6px;height:10px;background:#1a1a2a"></div>
      </div>
    <!-- thumb5 -->
    <div class="a" style="left:198px;top:481px;width:303px;height:128px;border-radius:5px;overflow:hidden;background:linear-gradient(180deg,#08163a,#0a1c48)">
      <div class="t" style="left:171px;top:61px;font-size:10px;color:#a8b0c8;letter-spacing:-.1px">Windows 11 Pro Insider Preview</div>
      <div class="t" style="left:67px;top:73px;font-size:10px;color:#b4bcd0;letter-spacing:-.15px">Evaluation copy. Build 25231.rs_prerelease.221022-17</div>
    </div>
    <!-- thumb6 -->
    <div class="a" style="left:513px;top:481px;width:209px;height:128px;border-radius:5px;overflow:hidden;background:linear-gradient(170deg,#5a0e1e 0%,#8a1a2a 45%,#b02a3a 70%,#a82838 100%)"><svg class="a" style="left:0;top:0" width="209" height="128" viewBox="0 0 209 128"><path d="M60 128 Q120 95 209 105" fill="none" stroke="#d86070" stroke-width="3" opacity=".6"/><path d="M0 110 Q50 100 100 128" fill="none" stroke="#c85060" stroke-width="2" opacity=".5"/></svg></div>
  </div>
  </div>

  <!-- details -->
  <div id="det">
  <div class="a" style="left:979px;top:149px;width:1px;height:568px;background:#2e2e2e"></div>
  <div class="a" style="left:980px;top:149px;width:276px;height:220px;background:#202020"></div>
  <svg class="i" style="left:1076px;top:217px" width="84" height="84"><use href="#gal" width="84" height="84"/></svg>
  <div class="t" style="left:1002px;top:399px;font-size:18.8px;font-weight:bold;color:#fff">Gallery (0 items)</div>
  <div class="a" style="left:1002px;top:436px;width:232px;height:81px;border:1px solid #2c2c2c;border-radius:5px"></div>
  <svg class="i" style="left:1015px;top:469px" width="15" height="15" viewBox="0 0 15 15"><circle cx="7.5" cy="7.5" r="7.5" fill="#c9c9c9"/><rect x="6.9" y="6.3" width="1.3" height="5" fill="#2a2a2a"/><circle cx="7.55" cy="4.3" r=".8" fill="#2a2a2a"/></svg>
  <div class="t" style="left:1043px;top:451px;font-size:14px;line-height:18.3px;color:#f2f2f2">Select a single file to get<br>more information and share<br>your cloud content.</div>
  </div>

  <!-- status -->
  <div id="stat">
  <div class="a" style="left:0;top:717px;width:1256px;height:23px;background:#1e1e1e"></div>
  <div class="t" style="left:15px;top:724px;font-size:11.5px;color:#f0f0f0">18 items</div>
  <div class="a" style="left:68px;top:724px;width:1px;height:11px;background:#e0e0e0"></div>
  </div>
</div>
<div id="dlg" class="a" style="left:430px;top:204px;width:516px;height:526px;border-radius:8px;background:#fff;overflow:hidden;box-shadow:0 8px 28px rgba(0,0,0,.45)">
  <div class="a" style="left:0;top:0;width:516px;height:30px;background:#eff0f5"></div>
  <svg class="i" style="left:8px;top:8px" width="16" height="14" viewBox="0 0 16 14"><rect x="1" y="0" width="14" height="12" fill="#1a8fe0"/><circle cx="11" cy="3" r="1.3" fill="#fff"/><path d="M2.5 12L8 6.3L13.5 12Z" fill="#eaf5fc"/><rect x="0" y="12.3" width="16" height="1.7" fill="#1a8fe0"/></svg>
  <div class="t" style="left:29px;top:9px;font-size:11.6px;color:#1a1a1a">Pictures Library Locations</div>
  <svg class="i" style="left:496px;top:9px" width="10" height="10" viewBox="0 0 10 10"><path d="M.4 .4L9.6 9.6M9.6 .4L.4 9.6" stroke="#1a1a1a" stroke-width="1.05"/></svg>
  <div class="t" style="left:10px;top:46px;font-size:15.5px;line-height:21px;color:#1d3a7e">Gallery displays the contents of the Pictures library.When you include a<br><span style="letter-spacing:.08px">folder, the files appear in the Gallery but continue to be stored in their</span><br>original locations.</div>
  <div class="t" style="left:10px;top:125px;font-size:11.7px;color:#111">Change how Gallery gathers its contents</div>
  <div class="t" style="left:10px;top:160px;font-size:11.8px;color:#111">Library locations</div>
  <div class="a" style="left:10px;top:181px;width:409px;height:255px;border:1px solid #6e6e6e;background:#fff"></div>
  <svg class="i" style="left:61px;top:197px" width="28" height="28"><use href="#pic" width="28" height="28"/></svg>
  <div class="t" style="left:98px;top:197px;font-size:14px;color:#1a1a1a">Pictures</div>
  <div class="t" style="left:98px;top:217px;font-size:12px;color:#6a6a6a">C:\Users\divya\OneDrive\Pictures</div>
  <div class="t" style="left:291px;top:201px;font-size:11.8px;color:#111">Default and public s...</div>
  <div class="a" style="left:428px;top:182px;width:77px;height:23px;border:1px solid #d0d0d0;border-radius:4px;background:#fdfdfd"></div>
  <div class="t" style="left:451px;top:189px;font-size:11.8px;color:#111">Add...</div>
  <div class="a" style="left:428px;top:222px;width:77px;height:23px;border:1px solid #e6e6e6;border-radius:4px;background:#f6f6f6"></div>
  <div class="t" style="left:445px;top:229px;font-size:11.8px;color:#a2a2a2">Remove</div>
  <div class="t" style="left:10px;top:453px;font-size:11.8px;color:#2a64a8">Learn more about libraries</div>
  <div class="a" style="left:0;top:481px;width:516px;height:45px;background:#f0f0f0;border-top:1px solid #e0e0e0"></div>
  <div class="a" style="left:349px;top:492px;width:73px;height:23px;border:1px solid #2f6e9c;border-radius:4px;background:#fdfdfd"></div>
  <div class="t" style="left:377px;top:499px;font-size:11.8px;color:#111">OK</div>
  <div class="a" style="left:432px;top:492px;width:73px;height:23px;border:1px solid #d4d4d4;border-radius:4px;background:#fdfdfd"></div>
  <div class="t" style="left:450px;top:499px;font-size:11.5px;color:#111">Cancel</div>
</div>
</body></html>
